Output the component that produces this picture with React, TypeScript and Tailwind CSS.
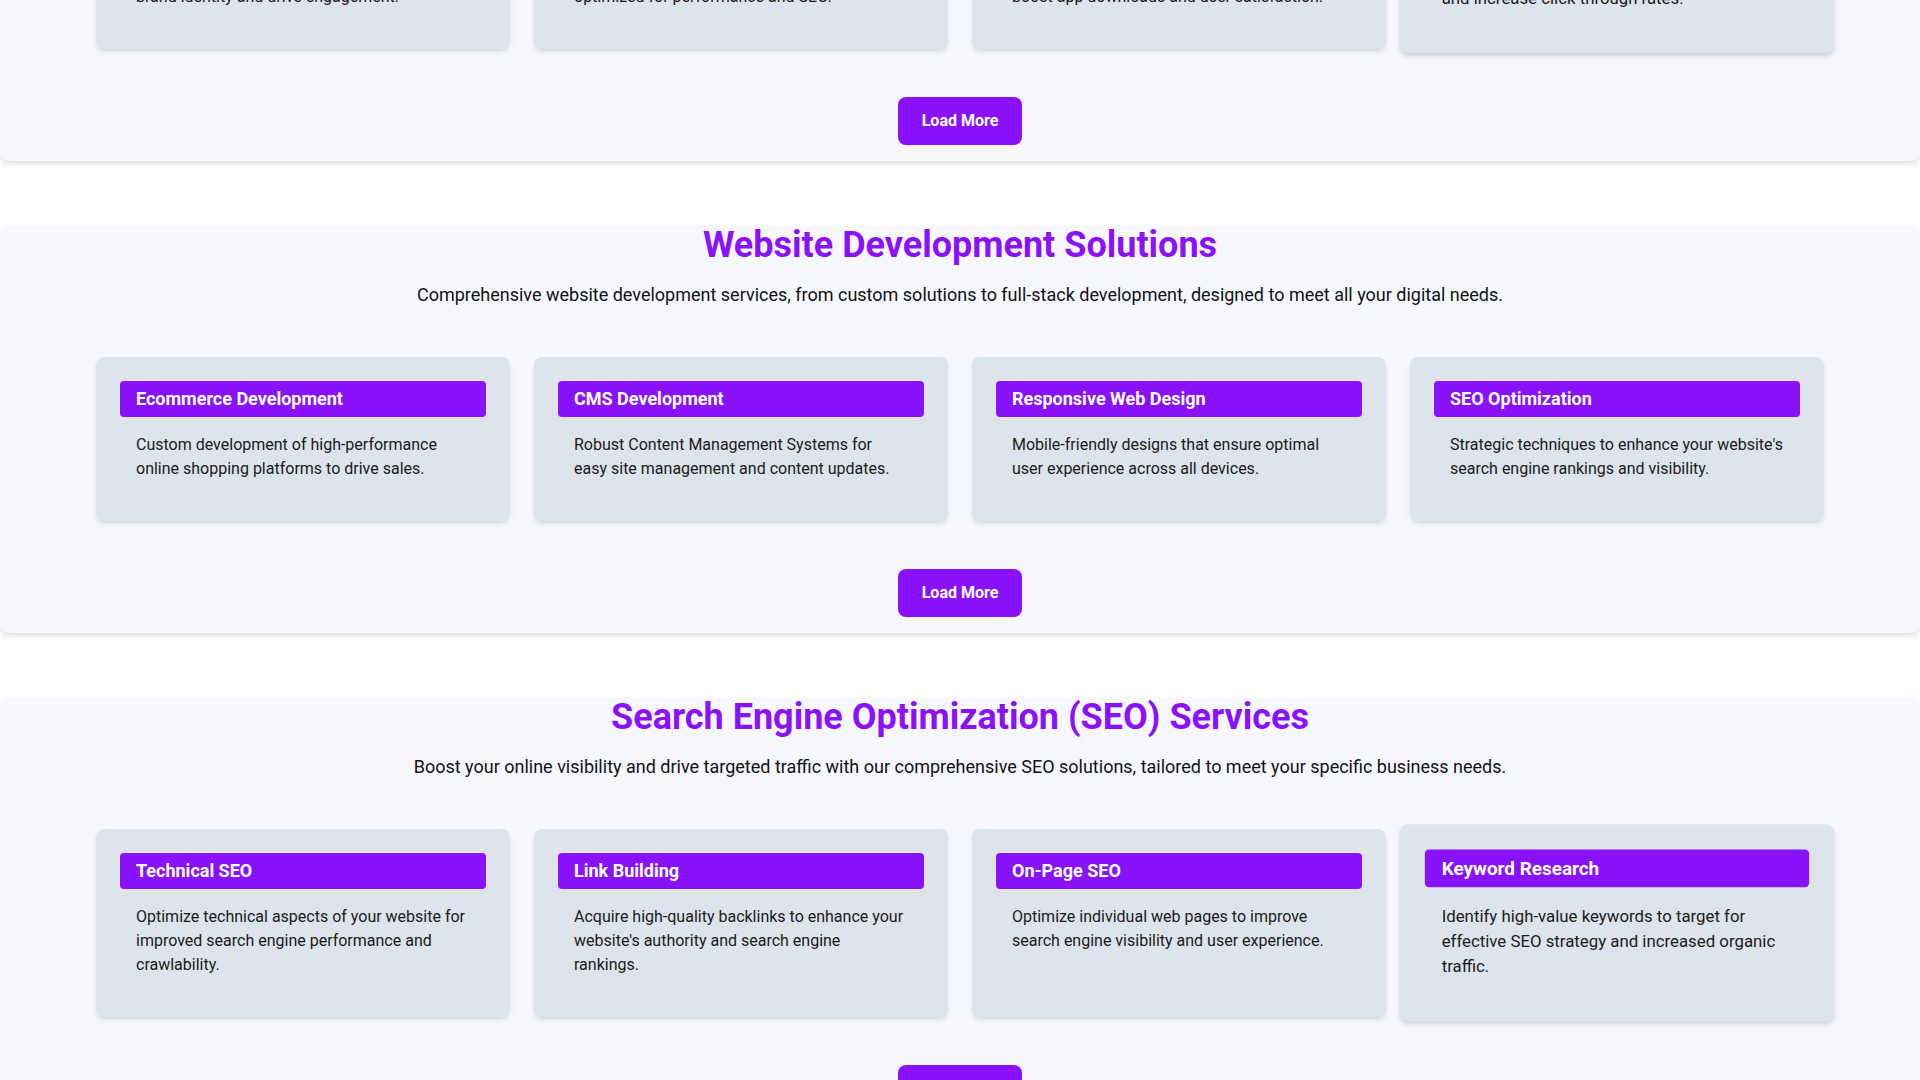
type Service = {
  title: string;
  text: string;
  lifted?: boolean;
};

type Section = {
  heading: string;
  intro: string;
  items: Service[];
};

const sections: Section[] = [
  {
    heading: "Digital Marketing & Design",
    intro:
      "Creative and technical services that help your business grow, engage customers and stand out online.",
    items: [
      {
        title: "Graphic Design",
        text: "Eye-catching visuals that strengthen your\nbrand identity and drive engagement.",
      },
      {
        title: "Web Development",
        text: "Fast, modern and secure websites that are\noptimized for performance and SEO.",
      },
      {
        title: "App Development",
        text: "Engaging mobile applications designed to\nboost app downloads and user satisfaction.",
      },
      {
        title: "PPC Advertising",
        text: "Targeted ad campaigns to maximize ROI\nand increase click through rates.",
        lifted: true,
      },
    ],
  },
  {
    heading: "Website Development Solutions",
    intro:
      "Comprehensive website development services, from custom solutions to full-stack development, designed to meet all your digital needs.",
    items: [
      {
        title: "Ecommerce Development",
        text: "Custom development of high-performance online shopping platforms to drive sales.",
      },
      {
        title: "CMS Development",
        text: "Robust Content Management Systems for easy site management and content updates.",
      },
      {
        title: "Responsive Web Design",
        text: "Mobile-friendly designs that ensure optimal user experience across all devices.",
      },
      {
        title: "SEO Optimization",
        text: "Strategic techniques to enhance your website's search engine rankings and visibility.",
      },
    ],
  },
  {
    heading: "Search Engine Optimization (SEO) Services",
    intro:
      "Boost your online visibility and drive targeted traffic with our comprehensive SEO solutions, tailored to meet your specific business needs.",
    items: [
      {
        title: "Technical SEO",
        text: "Optimize technical aspects of your website for improved search engine performance and crawlability.",
      },
      {
        title: "Link Building",
        text: "Acquire high-quality backlinks to enhance your website's authority and search engine rankings.",
      },
      {
        title: "On-Page SEO",
        text: "Optimize individual web pages to improve search engine visibility and user experience.",
      },
      {
        title: "Keyword Research",
        text: "Identify high-value keywords to target for effective SEO strategy and increased organic traffic.",
        lifted: true,
      },
    ],
  },
];

const ServiceCard = ({ title, text, lifted }: Service) => {
  return (
    <div
      className={
        "rounded-lg bg-[#dee4eb] p-6 shadow-md transition-transform " +
        (lifted ? "scale-105" : "")
      }
    >
      <h3 className="rounded bg-[#8a12fb] px-4 py-1 text-lg font-bold text-white">
        {title}
      </h3>
      <p className="whitespace-pre-line p-4 text-base leading-6 text-[#1a1a1a]">{text}</p>
    </div>
  );
};

const ServiceSection = ({ heading, intro, items }: Section) => {
  return (
    <section className="rounded-lg bg-[#f7f8fd] pb-4 shadow-md">
      <h2 className="text-center text-4xl font-bold text-[#8a12fb]">{heading}</h2>
      <p className="mt-4 text-center text-lg text-[#111]">{intro}</p>
      <div className="mt-12 grid grid-cols-4 gap-6 px-24">
        {items.map((item) => (
          <ServiceCard key={item.title} {...item} />
        ))}
      </div>
      <div className="mt-12 flex justify-center">
        <button className="rounded-lg bg-[#8a12fb] px-6 py-3 text-base font-bold text-white">
          Load More
        </button>
      </div>
    </section>
  );
};

export default function App() {
  return (
    <div
      className="h-screen overflow-hidden bg-white"
      style={{ fontFamily: "Roboto, 'Noto Sans', sans-serif" }}
    >
      <div className="-mt-[247px] flex flex-col gap-16">
        {sections.map((s) => (
          <ServiceSection key={s.heading} {...s} />
        ))}
      </div>
    </div>
  );
}
